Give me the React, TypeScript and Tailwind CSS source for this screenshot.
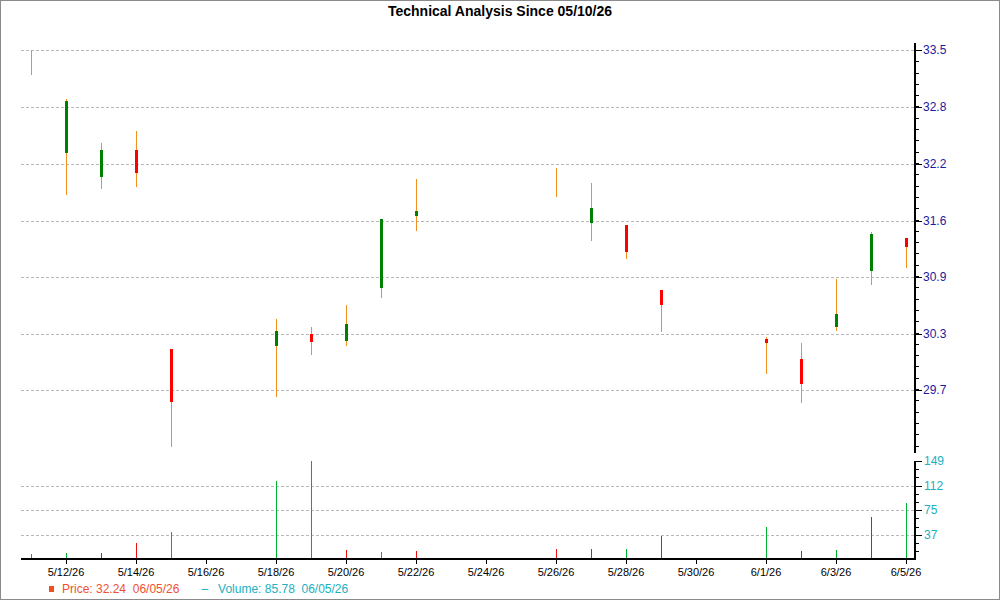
const F = { fontFamily: '"Liberation Sans", Arial, sans-serif' };

type C = [number, number, number, number, number, string];
const candles: C[] = [
  [30, 49, 74, 0, 0, ''],
  [65, 98, 194, 100, 152, 'g'],
  [100, 142, 188, 149, 176, 'g'],
  [135, 130, 186, 149, 172, 'r'],
  [170, 348, 446, 348, 401, 'r'],
  [275, 318, 396, 330, 345, 'g'],
  [310, 326, 354, 333, 341, 'r'],
  [345, 304, 345, 323, 340, 'g'],
  [380, 218, 297, 218, 287, 'g'],
  [415, 178, 230, 210, 215, 'g'],
  [555, 167, 196, 0, 0, ''],
  [590, 182, 240, 207, 222, 'g'],
  [625, 224, 258, 224, 251, 'r'],
  [660, 289, 331, 289, 304, 'r'],
  [765, 336, 373, 338, 342, 'r'],
  [800, 342, 402, 358, 383, 'r'],
  [835, 278, 330, 313, 326, 'g'],
  [870, 231, 284, 233, 270, 'g'],
  [905, 237, 267, 237, 246, 'r'],
];
const vols: [number, number, string][] = [
  [30, 553, 'g'], [65, 552, 'g'], [100, 552, 'r'], [135, 542, 'r'], [170, 531, 'g'],
  [275, 480, 'g'], [310, 460, 'g'], [345, 549, 'r'], [380, 551, 'g'], [415, 550, 'r'],
  [555, 548, 'r'], [590, 548, 'r'], [625, 548, 'g'], [660, 535, 'r'],
  [765, 526, 'g'], [800, 550, 'r'], [835, 549, 'g'], [870, 516, 'r'], [905, 502, 'g'],
];
const priceGrid: [number, string][] = [[49, '33.5'], [106, '32.8'], [163, '32.2'], [220, '31.6'], [276, '30.9'], [333, '30.3'], [389, '29.7']];
const volGrid: [number, string][] = [[460, '149'], [485, '112'], [509, '75'], [534, '37']];
const xl = ['5/12/26', '5/14/26', '5/16/26', '5/18/26', '5/20/26', '5/22/26', '5/24/26', '5/26/26', '5/28/26', '5/30/26', '6/1/26', '6/3/26', '6/5/26'];

export default function App() {
  const minor: number[] = [];
  for (let y = 49; y <= 446; y += 11.3) minor.push(Math.round(y) + 0.5);
  const vminor: number[] = [];
  for (let y = 460; y <= 558; y += 8.2) vminor.push(Math.round(y) + 0.5);
  return (
    <div className="w-[1000px] h-[600px] border border-[#8a8a8a] bg-white flex flex-col overflow-hidden" style={F}>
      <div className="h-[20px] text-center text-[14px] font-bold text-black leading-[20px]">Technical Analysis Since 05/10/26</div>
      <svg width="998" height="558" viewBox="0 20 998 558" className="block" shapeRendering="crispEdges">
        {priceGrid.map(([y]) => (
          <line key={y} x1={20} x2={914} y1={y + 0.5} y2={y + 0.5} stroke="#b8b8b8" strokeDasharray="3 2" />
        ))}
        {volGrid.slice(1).map(([y]) => (
          <line key={y} x1={20} x2={914} y1={y + 0.5} y2={y + 0.5} stroke="#b8b8b8" strokeDasharray="3 2" />
        ))}
        <line x1={914} x2={914} y1={42} y2={452} stroke="#000" strokeWidth={2} />
        <line x1={914} x2={914} y1={460} y2={558} stroke="#000" strokeWidth={2} />
        <line x1={20} x2={915} y1={558} y2={558} stroke="#000" strokeWidth={2} />
        {minor.map((y, i) => <line key={i} x1={914} x2={918} y1={y} y2={y} stroke="#000" />)}
        {priceGrid.map(([y]) => <line key={y} x1={914} x2={921} y1={y + 0.5} y2={y + 0.5} stroke="#000" />)}
        {vminor.map((y, i) => <line key={i} x1={914} x2={918} y1={y} y2={y} stroke="#000" />)}
        {volGrid.map(([y]) => <line key={y} x1={914} x2={921} y1={y + 0.5} y2={y + 0.5} stroke="#000" />)}
        {priceGrid.map(([y, t]) => (
          <text key={t} x={922} y={y + 4} fontSize={12} fill="#1a1aa0">{t}</text>
        ))}
        {volGrid.map(([y, t]) => (
          <text key={t} x={923} y={y + 4} fontSize={12} fill="#20b0c0">{t}</text>
        ))}
        {xl.map((t, i) => {
          const x = 65 + i * 70;
          return (
            <g key={t}>
              <line x1={x + 0.5} x2={x + 0.5} y1={558} y2={563} stroke="#000" />
              <text x={x} y={575} fontSize={11} textAnchor="middle" fill="#000">{t}</text>
            </g>
          );
        })}
        {vols.map(([x, y, c], i) => (
          <line key={i} x1={x + 0.5} x2={x + 0.5} y1={y} y2={557} stroke={c === 'g' ? '#00b030' : '#f01010'} />
        ))}
        {candles.map(([x, wt, wb, bt, bb, c], i) => (
          <g key={i}>
            <line x1={x + 0.5} x2={x + 0.5} y1={wt} y2={wb} stroke="#f09020" />
            {c && (
              <rect x={x - 1} y={bt} width={3} height={bb - bt} fill={c === 'g' ? '#008000' : '#ff0000'} />
            )}
          </g>
        ))}
      </svg>
      <div className="h-[20px] flex items-center text-[12px] pl-[48px]">
        <span className="w-[5px] h-[6px] bg-[#f05020] mr-[8px]" />
        <span className="text-[#f05030]">Price: 32.24&nbsp; 06/05/26</span>
        <span className="text-[#20b0c0] ml-[22px]">–&nbsp;&nbsp; Volume: 85.78&nbsp; 06/05/26</span>
      </div>
    </div>
  );
}
